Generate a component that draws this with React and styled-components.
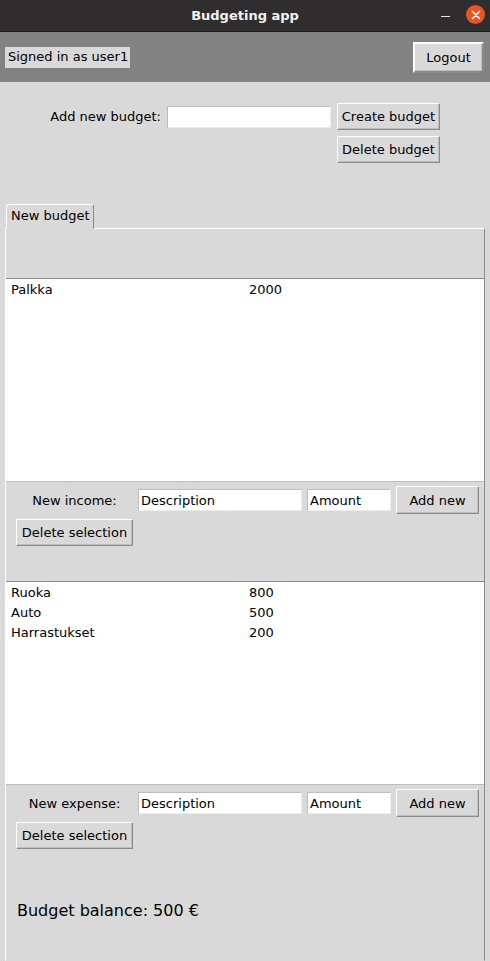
import React from "react";
import styled, { createGlobalStyle } from "styled-components";

const GlobalStyle = createGlobalStyle`
  html, body {
    margin: 0;
    padding: 0;
    background: #d9d9d9;
  }
  body {
    font-family: "DejaVu Sans", "Liberation Sans", sans-serif;
    font-size: 13px;
    color: #000;
  }
`;

const Window = styled.div`
  width: 490px;
  height: 961px;
  display: flex;
  flex-direction: column;
  background: #d9d9d9;
  overflow: hidden;
`;

const TitleBar = styled.div`
  height: 31px;
  flex-shrink: 0;
  background: #2f2d2d;
  border-bottom: 1px solid #1e1d1d;
  position: relative;
  display: flex;
  align-items: center;
  justify-content: center;
  color: #f2f2f2;
  font-weight: bold;
  font-size: 13px;
`;

const WindowControls = styled.div`
  position: absolute;
  right: 5px;
  top: 5px;
  display: flex;
  align-items: center;
  gap: 16px;
`;

const MinimizeMark = styled.span`
  width: 9px;
  height: 1px;
  background: #e8e8e8;
  margin-top: 4px;
`;

const CloseButton = styled.span`
  width: 19px;
  height: 19px;
  border-radius: 50%;
  background: #e95420;
  display: flex;
  align-items: center;
  justify-content: center;
`;

const UserBar = styled.div`
  height: 50px;
  flex-shrink: 0;
  background: #828282;
  display: flex;
  align-items: center;
  justify-content: space-between;
  padding: 0 6px 0 5px;
`;

const UserLabel = styled.span`
  background: #d9d9d9;
  padding: 2px 2px 3px 3px;
  line-height: 16px;
`;

const Button = styled.button`
  font-family: inherit;
  font-size: 13px;
  color: #000;
  background: #d9d9d9;
  border: 1px solid;
  border-color: #ffffff #8a8a8a #8a8a8a #ffffff;
  box-shadow: inset -1px -1px 0 #bdbdbd;
  padding: 0;
  height: ${(p) => p.$h || 27}px;
  width: ${(p) => (p.$w ? `${p.$w}px` : "auto")};
  line-height: 1;
  white-space: nowrap;
  cursor: pointer;
`;

const LogoutButton = styled(Button)`
  width: 71px;
  height: 31px;
  border-width: 2px;
`;

const BudgetForm = styled.div`
  display: grid;
  grid-template-columns: 161px 164px 103px;
  column-gap: 6px;
  row-gap: 6px;
  padding: 21px 0 0 0;
  align-items: center;
`;

const FormLabel = styled.label`
  text-align: right;
  white-space: nowrap;
`;

const Entry = styled.input`
  box-sizing: border-box;
  font-family: inherit;
  font-size: 13px;
  color: #000;
  width: ${(p) => p.$w}px;
  height: ${(p) => p.$h || 22}px;
  border: 1px solid;
  border-color: #bdbdbd #ececec #ececec #bdbdbd;
  background: #fff;
  padding: 0 2px;
  outline: none;
`;

const Tabs = styled.div`
  margin-top: 40px;
  padding: 0 5px;
  display: flex;
  flex-direction: column;
  flex: 1;
`;

const TabStrip = styled.div`
  display: flex;
  padding-left: 1px;
  height: 25px;
`;

const Tab = styled.div`
  width: 88px;
  box-sizing: border-box;
  border: 1px solid;
  border-color: #ffffff #8a8a8a transparent #ffffff;
  border-radius: 3px 3px 0 0;
  padding: 3px 0 0 4px;
  background: #d9d9d9;
  position: relative;
  top: 1px;
  z-index: 1;
`;

const Pane = styled.div`
  flex: 1;
  border: 1px solid;
  border-color: #ffffff #8a8a8a transparent #ffffff;
  display: flex;
  flex-direction: column;
`;

const Spacer = styled.div`
  height: ${(p) => p.$h}px;
  flex-shrink: 0;
`;

const ListBox = styled.div`
  height: 200px;
  background: #fff;
  border-top: 1px solid #8a8a8a;
  border-bottom: 1px solid #bdbdbd;
  padding: 2px 0 0 5px;
  flex-shrink: 0;
`;

const ListRow = styled.div`
  display: grid;
  grid-template-columns: 238px 1fr;
  height: 20px;
  line-height: 18px;
`;

const EntryRow = styled.div`
  display: grid;
  grid-template-columns: 127px 164px 84px 83px;
  column-gap: 5px;
  align-items: center;
  padding: 4px 0 0 0;
`;

const RowLabel = styled.span`
  text-align: center;
  padding-left: 10px;
`;

const DeleteRow = styled.div`
  padding: 5px 0 0 10px;
`;

const Balance = styled.div`
  font-size: 16px;
  padding: 0 0 0 11px;
`;

const incomes = [["Palkka", "2000"]];
const expenses = [
  ["Ruoka", "800"],
  ["Auto", "500"],
  ["Harrastukset", "200"],
];

function TransactionList({ rows }) {
  return (
    <ListBox>
      {rows.map(([name, amount]) => (
        <ListRow key={name}>
          <span>{name}</span>
          <span>{amount}</span>
        </ListRow>
      ))}
    </ListBox>
  );
}

function TransactionForm({ label }) {
  return (
    <>
      <EntryRow>
        <RowLabel>{label}</RowLabel>
        <Entry $w={164} defaultValue="Description" />
        <Entry $w={84} defaultValue="Amount" />
        <Button $w={83} $h={28}>
          Add new
        </Button>
      </EntryRow>
      <DeleteRow>
        <Button $w={117}>Delete selection</Button>
      </DeleteRow>
    </>
  );
}

export default function App() {
  return (
    <>
      <GlobalStyle />
      <Window>
        <TitleBar>
          Budgeting app
          <WindowControls>
            <MinimizeMark />
            <CloseButton>
              <svg width="10" height="10" viewBox="0 0 10 10">
                <path
                  d="M1.5 1.5 L8.5 8.5 M8.5 1.5 L1.5 8.5"
                  stroke="#fff"
                  strokeWidth="1.6"
                  strokeLinecap="round"
                />
              </svg>
            </CloseButton>
          </WindowControls>
        </TitleBar>
        <UserBar>
          <UserLabel>Signed in as user1</UserLabel>
          <LogoutButton>Logout</LogoutButton>
        </UserBar>
        <BudgetForm>
          <FormLabel>Add new budget:</FormLabel>
          <Entry $w={164} $h={22} />
          <Button $w={103}>Create budget</Button>
          <span />
          <span />
          <Button $w={103}>Delete budget</Button>
        </BudgetForm>
        <Tabs>
          <TabStrip>
            <Tab>New budget</Tab>
          </TabStrip>
          <Pane>
            <Spacer $h={49} />
            <TransactionList rows={incomes} />
            <TransactionForm label="New income:" />
            <Spacer $h={35} />
            <TransactionList rows={expenses} />
            <TransactionForm label="New expense:" />
            <Spacer $h={52} />
            <Balance>Budget balance: 500 €</Balance>
          </Pane>
        </Tabs>
      </Window>
    </>
  );
}
